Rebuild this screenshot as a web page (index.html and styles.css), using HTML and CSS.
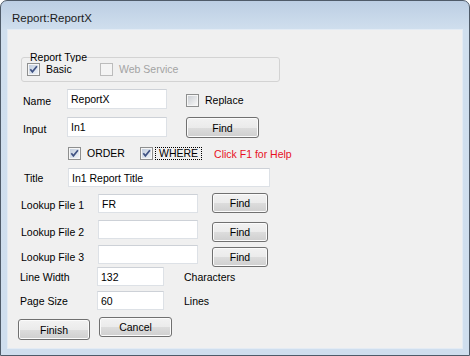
FILE: index.html
```html
<!DOCTYPE html>
<html lang="en">
<head>
    <meta charset="UTF-8">
    <title>Report:ReportX</title>
    <link rel="stylesheet" href="styles.css">
</head>
<body>

    <!-- shared gradients for the checkboxes -->
    <svg class="defs" width="0" height="0">
        <defs>
            <linearGradient id="fill-on" x1="0" y1="0" x2="1" y2="1">
                <stop offset="0" stop-color="#c3cede"/>
                <stop offset="1" stop-color="#eef2f7"/>
            </linearGradient>
            <linearGradient id="fill-off" x1="0" y1="0" x2="1" y2="1">
                <stop offset="0" stop-color="#cbcfd4"/>
                <stop offset="1" stop-color="#f7f7f7"/>
            </linearGradient>
        </defs>
    </svg>

    <div class="window">
        <div class="titlebar">Report:ReportX</div>

        <div class="client">

            <!-- Report type -->
            <fieldset class="group">
                <legend><span>Report Type</span></legend>
                <div class="group-row">
                    <label class="check check-basic">
                        <svg class="cb" width="13" height="13" viewBox="0 0 13 13">
                            <rect x="0.5" y="0.5" width="12" height="12" fill="#f6f6f6" stroke="#8e8f8f"/>
                            <rect x="2" y="2" width="9" height="9" fill="url(#fill-on)"/>
                            <path d="M3.3 6.2 L5.4 8.8 L9.9 3.2" fill="none" stroke="#3f5283" stroke-width="1.7"/>
                        </svg>
                        Basic
                    </label>
                    <label class="check disabled">
                        <svg class="cb" width="13" height="13" viewBox="0 0 13 13">
                            <rect x="0.5" y="0.5" width="12" height="12" fill="#f4f4f4" stroke="#bcbcbc"/>
                        </svg>
                        Web Service
                    </label>
                </div>
            </fieldset>

            <div class="row row-name">
                <span class="lbl lbl-short">Name</span>
                <input class="textbox tb-100" type="text" value="ReportX">
                <label class="check check-replace">
                    <svg class="cb" width="13" height="13" viewBox="0 0 13 13">
                        <rect x="0.5" y="0.5" width="12" height="12" fill="#f6f6f6" stroke="#8e8f8f"/>
                        <rect x="2" y="2" width="9" height="9" fill="url(#fill-off)"/>
                    </svg>
                    Replace
                </label>
            </div>

            <div class="row row-input">
                <span class="lbl lbl-short">Input</span>
                <input class="textbox tb-100" type="text" value="In1">
                <button class="btn btn-find-input">Find</button>
            </div>

            <div class="row row-checks">
                <label class="check check-order">
                    <svg class="cb" width="13" height="13" viewBox="0 0 13 13">
                        <rect x="0.5" y="0.5" width="12" height="12" fill="#f6f6f6" stroke="#8e8f8f"/>
                        <rect x="2" y="2" width="9" height="9" fill="url(#fill-on)"/>
                        <path d="M3.3 6.2 L5.4 8.8 L9.9 3.2" fill="none" stroke="#3f5283" stroke-width="1.7"/>
                    </svg>
                    ORDER
                </label>
                <label class="check check-where">
                    <svg class="cb" width="13" height="13" viewBox="0 0 13 13">
                        <rect x="0.5" y="0.5" width="12" height="12" fill="#f6f6f6" stroke="#8e8f8f"/>
                        <rect x="2" y="2" width="9" height="9" fill="url(#fill-on)"/>
                        <path d="M3.3 6.2 L5.4 8.8 L9.9 3.2" fill="none" stroke="#3f5283" stroke-width="1.7"/>
                    </svg>
                    <span class="focus">WHERE</span>
                </label>
                <span class="help">Click F1 for Help</span>
            </div>

            <div class="row row-title">
                <span class="lbl lbl-short">Title</span>
                <input class="textbox tb-202" type="text" value="In1 Report Title">
            </div>

            <div class="row row-lookup1">
                <span class="lbl lbl-long">Lookup File 1</span>
                <input class="textbox tb-100" type="text" value="FR">
                <button class="btn btn-find">Find</button>
            </div>

            <div class="row row-lookup2">
                <span class="lbl lbl-long">Lookup File 2</span>
                <input class="textbox tb-100" type="text" value="">
                <button class="btn btn-find">Find</button>
            </div>

            <div class="row row-lookup3">
                <span class="lbl lbl-long">Lookup File 3</span>
                <input class="textbox tb-100" type="text" value="">
                <button class="btn btn-find">Find</button>
            </div>

            <div class="row row-width">
                <span class="lbl lbl-long">Line Width</span>
                <input class="textbox tb-67" type="text" value="132">
                <span class="unit">Characters</span>
            </div>

            <div class="row row-size">
                <span class="lbl lbl-long">Page Size</span>
                <input class="textbox tb-67" type="text" value="60">
                <span class="unit">Lines</span>
            </div>

            <div class="row row-actions">
                <button class="btn btn-finish">Finish</button>
                <button class="btn btn-cancel">Cancel</button>
            </div>

        </div>
    </div>

</body>
</html>
```

FILE: styles.css
```css
body {
    margin: 0;
    background: #ffffff;
    font-family: 'Liberation Sans', Arial, sans-serif;
    font-size: 10.5px;
    color: #000;
}

.defs {
    position: absolute;
}

/* VENTANA */
.window {
    width: 470px;
    height: 356px;
    box-sizing: border-box;
    border: 1px solid #4f5b69;
    border-radius: 7px 7px 0 0;
    padding: 0 7px 7px 7px;
    background: linear-gradient(#bccee3 0px, #d0dfee 29px, #cfdeee 100%);
}

.titlebar {
    height: 29px;
    box-sizing: border-box;
    padding: 10px 0 0 4px;
    font-size: 11.5px;
    line-height: 14px;
    color: #1b1b1b;
}

.client {
    height: 318px;
    background-color: #f0f0f0;
    box-shadow: 0 0 0 1px #e3ebf4;
    overflow: hidden;
}

/* GRUPO */
.group {
    margin: 21px 0 0 13px;
    padding: 0 0 5px 5px;
    width: 259px;
    height: 31px;
    box-sizing: border-box;
    border: 1px solid #d3d3d3;
    border-radius: 3px;
    min-width: 0;
}

.group legend {
    margin-left: 3px;
    padding: 0;
    height: 12px;
}

.group legend span {
    display: block;
    height: 11px;
    line-height: 12px;
    overflow: hidden;
}

.group-row {
    display: flex;
    align-items: center;
    height: 13px;
}

/* CASILLAS */
.check {
    display: flex;
    align-items: center;
    line-height: 13px;
    height: 13px;
}

.cb {
    flex: none;
    margin-right: 6px;
}

.check-basic {
    width: 73px;
}

.check.disabled {
    color: #a3a3a3;
}

.check-replace {
    margin: 5px 0 0 19px;
}

.check-order {
    width: 72px;
}

.check-where .cb {
    margin-right: 2px;
}

.focus {
    border: 1px dotted #000;
    padding: 0 3px;
    line-height: 11px;
}

.help {
    color: #e8101e;
    margin-left: 12px;
}

/* FILAS */
.row {
    display: flex;
    align-items: flex-start;
}

.lbl {
    padding-top: 2px;
    line-height: 20px;
    flex: none;
}

.lbl-short {
    width: 44px;
}

.lbl-long {
    width: 77px;
}

.textbox {
    font: inherit;
    color: #000;
    box-sizing: border-box;
    height: 20px;
    margin: 0;
    padding: 0 3px;
    background: #fff;
    border: 1px solid #dde1e6;
    border-top-color: #cdd1d7;
    outline: none;
}

.tb-100 { width: 100px; }
.tb-202 { width: 202px; height: 19px; }
.tb-67  { width: 67px; height: 19px; }

.btn {
    font: inherit;
    color: #000;
    box-sizing: border-box;
    margin: 0;
    padding: 0;
    border: 1px solid #707070;
    border-radius: 3px;
    background: linear-gradient(#f2f2f2 0%, #ebebeb 50%, #dddddd 50%, #cfcfcf 100%);
    box-shadow: inset 0 0 0 1px #fbfbfb;
    text-align: center;
}

.btn-find-input {
    width: 73px;
    height: 21px;
    margin-left: 19px;
}

.btn-find {
    width: 56px;
    height: 20px;
    margin-left: 14px;
}

.unit {
    margin-left: 20px;
    padding-top: 2px;
    line-height: 17px;
}

/* posiciones verticales */
.row-name { margin-top: 7px; height: 20px; padding-left: 15px; }
.row-input { margin-top: 8px; height: 21px; padding-left: 15px; }
.row-checks { margin-top: 9px; height: 13px; padding-left: 60px; align-items: center; }
.row-title { margin-top: 8px; height: 20px; padding-left: 16px; }
.row-title .lbl { padding-top: 0; }

.row-lookup1 { margin-top: 5px; height: 20px; padding-left: 13px; }
.row-lookup1 .textbox { margin-top: 1px; height: 19px; }
.row-lookup2 { margin-top: 7px; height: 22px; padding-left: 13px; }
.row-lookup2 .textbox { height: 19px; }
.row-lookup2 .btn { margin-top: 2px; }
.row-lookup3 { margin-top: 3px; height: 22px; padding-left: 13px; }
.row-lookup3 .textbox { height: 19px; }
.row-lookup3 .btn { margin-top: 2px; }

.row-width { margin-top: 0; height: 19px; padding-left: 12px; }
.row-size { margin-top: 5px; height: 19px; padding-left: 12px; }
.row-width .lbl, .row-size .lbl { line-height: 17px; }

.row-actions { margin-top: 7px; padding-left: 10px; }

.btn-finish {
    width: 72px;
    height: 21px;
    margin-top: 2px;
}

.btn-cancel {
    width: 73px;
    height: 20px;
    margin-left: 9px;
}
```
